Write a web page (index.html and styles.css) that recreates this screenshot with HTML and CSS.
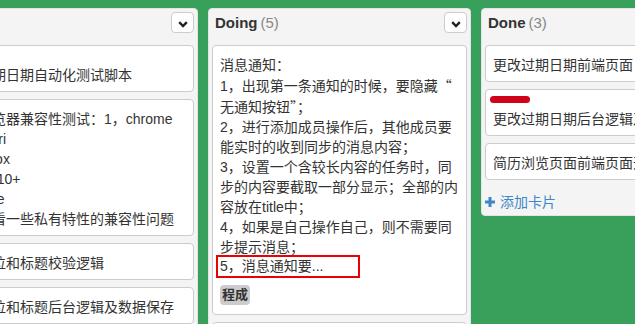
FILE: index.html
```html
<!DOCTYPE html>
<html lang="zh-CN">
<head>
  <meta charset="UTF-8" />
  <title>任务看板</title>
  <link rel="stylesheet" href="styles.css">
</head>

<body>
  <div class="board">

    <!-- To Do -->
    <div class="list">
      <div class="list-header">
        <div class="list-title">To Do</div>
        <button class="list-menu">
          <svg width="10" height="7" viewBox="0 0 10 7"><path d="M1.2 1.2 5 5 8.8 1.2" fill="none" stroke="#222" stroke-width="2.4"/></svg>
        </button>
      </div>
      <div class="card">
        <div class="card-label"></div>
        <div class="card-text">更改过期日期自动化测试脚本</div>
      </div>
      <div class="card">
        <div class="card-text">主流浏览器兼容性测试：1，chrome<br>2，safari<br>3，firefox<br>4，IE9/10+<br>5，Edge<br>最后查看一些私有特性的兼容性问题</div>
      </div>
      <div class="card">
        <div class="card-text">添加职位和标题校验逻辑</div>
      </div>
      <div class="card">
        <div class="card-text">添加职位和标题后台逻辑及数据保存</div>
      </div>
    </div>

    <!-- Doing -->
    <div class="list">
      <div class="list-header">
        <div class="list-title">Doing<span class="list-count">(5)</span></div>
        <button class="list-menu">
          <svg width="10" height="7" viewBox="0 0 10 7"><path d="M1.2 1.2 5 5 8.8 1.2" fill="none" stroke="#222" stroke-width="2.4"/></svg>
        </button>
      </div>
      <div class="card">
        <div class="card-text">消息通知：<br>1，出现第一条通知的时候，要隐藏<span class="cjk">“</span><br>无通知按钮<span class="cjk">”</span>；<br>2，进行添加成员操作后，其他成员要<br>能实时的收到同步的消息内容；<br>3，设置一个含较长内容的任务时，同<br>步的内容要截取一部分显示；全部的内<br>容放在title中；<br>4，如果是自己操作自己，则不需要同<br>步提示消息；</div>
        <div class="highlight">5，消息通知要...</div>
        <div class="card-badges">
          <span class="badge">程成</span>
        </div>
      </div>
      <div class="card">
        <div class="card-text">成员列表页面前端页面</div>
      </div>
    </div>

    <!-- Done -->
    <div class="list">
      <div class="list-header">
        <div class="list-title">Done<span class="list-count">(3)</span></div>
      </div>
      <div class="card">
        <div class="card-text">更改过期日期前端页面</div>
      </div>
      <div class="card">
        <div class="card-label"></div>
        <div class="card-text">更改过期日期后台逻辑及数据保存</div>
      </div>
      <div class="card">
        <div class="card-text">简历浏览页面前端页面开发</div>
      </div>
      <a class="add-card" href="#">
        <svg width="10" height="10" viewBox="0 0 10 10"><path d="M5 0v10M0 5h10" stroke="#3f86c8" stroke-width="3"/></svg>
        添加卡片
      </a>
    </div>

  </div>
</body>
</html>
```

FILE: styles.css
```css
* {
  margin: 0;
  padding: 0;
  box-sizing: border-box;
  font-family: "Liberation Sans", "Noto Sans CJK SC", sans-serif;
}

body {
  background-color: #38a05b;
  color: #333;
  font-size: 14px;
  height: 100vh;
  overflow: hidden;
}

.board {
  display: flex;
  align-items: flex-start;
  gap: 10px;
  padding-top: 8px;
  margin-left: -62px;
}

.list {
  flex: 0 0 260px;
  background-color: #f4f4f4;
  border: 1px solid #e4e4e4;
  border-radius: 4px;
  padding: 3px;
}

.list-header {
  display: flex;
  justify-content: space-between;
  align-items: flex-start;
  min-height: 21px;
  margin-bottom: 12px;
  padding-left: 3px;
}

.list-title {
  font-size: 15px;
  font-weight: bold;
  line-height: 21px;
}

.list-count {
  font-weight: normal;
  color: #888;
  margin-left: 3px;
}

.list-menu {
  width: 23px;
  height: 21px;
  background-color: white;
  border: 1px solid #ccc;
  border-radius: 4px;
  display: flex;
  justify-content: center;
  padding-top: 8px;
  cursor: pointer;
}

.card {
  background-color: white;
  border: 1px solid #ccc;
  border-radius: 4px;
  padding: 9px 8px 6px 7px;
  margin-bottom: 7px;
  line-height: 20px;
  overflow: hidden;
}

.card-label {
  width: 40px;
  height: 7px;
  border-radius: 4px;
  background-color: #d0021b;
  margin: -3px 0 6px -3px;
}

.card-text {
  white-space: nowrap;
}

/* full-width quotes, like the Chinese UI font */
.cjk {
  font-family: "Noto Sans CJK SC", sans-serif;
}

/* red frame round the truncated line */
.highlight {
  width: 144px;
  height: 23px;
  border: 2px solid #ee0000;
  margin: -2px 0 0 -4px;
  padding-left: 2px;
  line-height: 19px;
  white-space: nowrap;
}

.card-badges {
  display: flex;
  margin-top: 7px;
  margin-bottom: 3px;
}

.badge {
  background-color: #ccc;
  border-radius: 4px;
  font-size: 13px;
  font-weight: bold;
  line-height: 20px;
  padding: 0 2px;
}

.add-card {
  display: flex;
  align-items: center;
  gap: 5px;
  padding-top: 5px;
  line-height: 20px;
  color: #3f86c8;
  text-decoration: none;
}
```
